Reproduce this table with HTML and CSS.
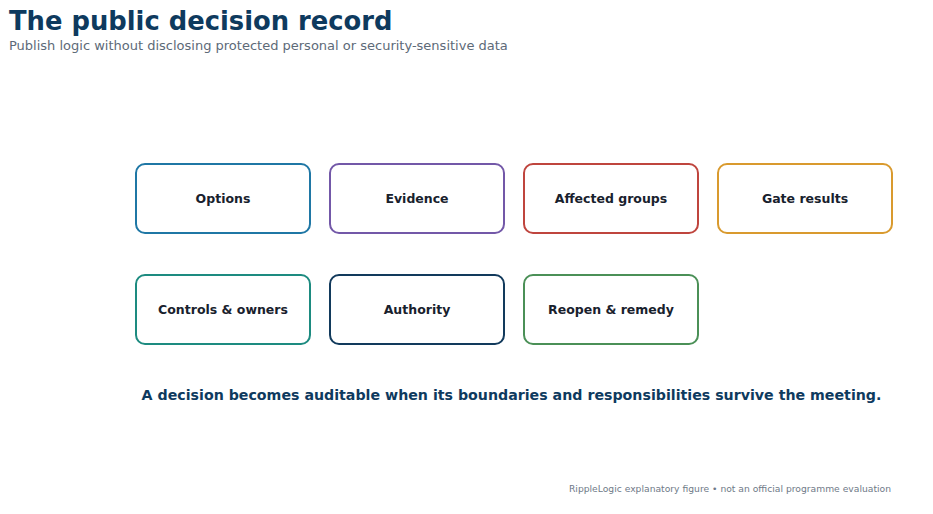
FILE: index.html
```html
<!DOCTYPE html>
<html>
<head>
<meta charset="utf-8">
<link rel="stylesheet" href="styles.css">
</head>
<body>
<header class="head">
  <h1 class="title">The public decision record</h1>
  <p class="subtitle">Publish logic without disclosing protected personal or security-sensitive data</p>
</header>
<main class="figure">
  <div class="grid">
    <div class="card c-blue">Options</div>
    <div class="card c-purple">Evidence</div>
    <div class="card c-red">Affected groups</div>
    <div class="card c-orange">Gate results</div>
    <div class="card c-teal">Controls &amp; owners</div>
    <div class="card c-navy">Authority</div>
    <div class="card c-green">Reopen &amp; remedy</div>
  </div>
  <p class="takeaway">A decision becomes auditable when its boundaries and responsibilities survive the meeting.</p>
  <p class="footer">RippleLogic explanatory figure • not an official programme evaluation</p>
</main>
</body>
</html>
```
FILE: styles.css
```css
html, body {
  margin: 0;
  padding: 0;
  background: #ffffff;
  font-family: "DejaVu Sans", "Liberation Sans", sans-serif;
}
.head {
  padding: 6px 0 0 9px;
}
.title {
  margin: 0;
  font-size: 25.8px;
  line-height: 30px;
  font-weight: bold;
  color: #0e3a5e;
}
.subtitle {
  margin: 2px 0 0 0;
  font-size: 13px;
  line-height: 16px;
  color: #5d6a78;
}
.figure {
  width: 758px;
  margin: 109px 0 0 135px;
}
.grid {
  display: grid;
  grid-template-columns: repeat(4, 176px);
  grid-auto-rows: 71px;
  column-gap: 18px;
  row-gap: 40px;
}
.card {
  box-sizing: border-box;
  border: 2px solid #1f78a8;
  border-radius: 10px;
  display: flex;
  align-items: center;
  justify-content: center;
  font-size: 12.5px;
  font-weight: bold;
  color: #18212d;
}
.c-blue { border-color: #1f77a5; }
.c-purple { border-color: #7358a8; }
.c-red { border-color: #bf453e; }
.c-orange { border-color: #d99a2e; }
.c-teal { border-color: #1d8b80; }
.c-navy { border-color: #123a5c; }
.c-green { border-color: #4b9057; }
.takeaway {
  margin: 40px -35px 0 -40px;
  text-align: center;
  white-space: nowrap;
  font-size: 14.2px;
  line-height: 20px;
  font-weight: bold;
  color: #0e3a5e;
}
.footer {
  margin: 78px 2px 0 0;
  text-align: right;
  font-size: 9.2px;
  line-height: 12px;
  color: #6f7a88;
}
```
